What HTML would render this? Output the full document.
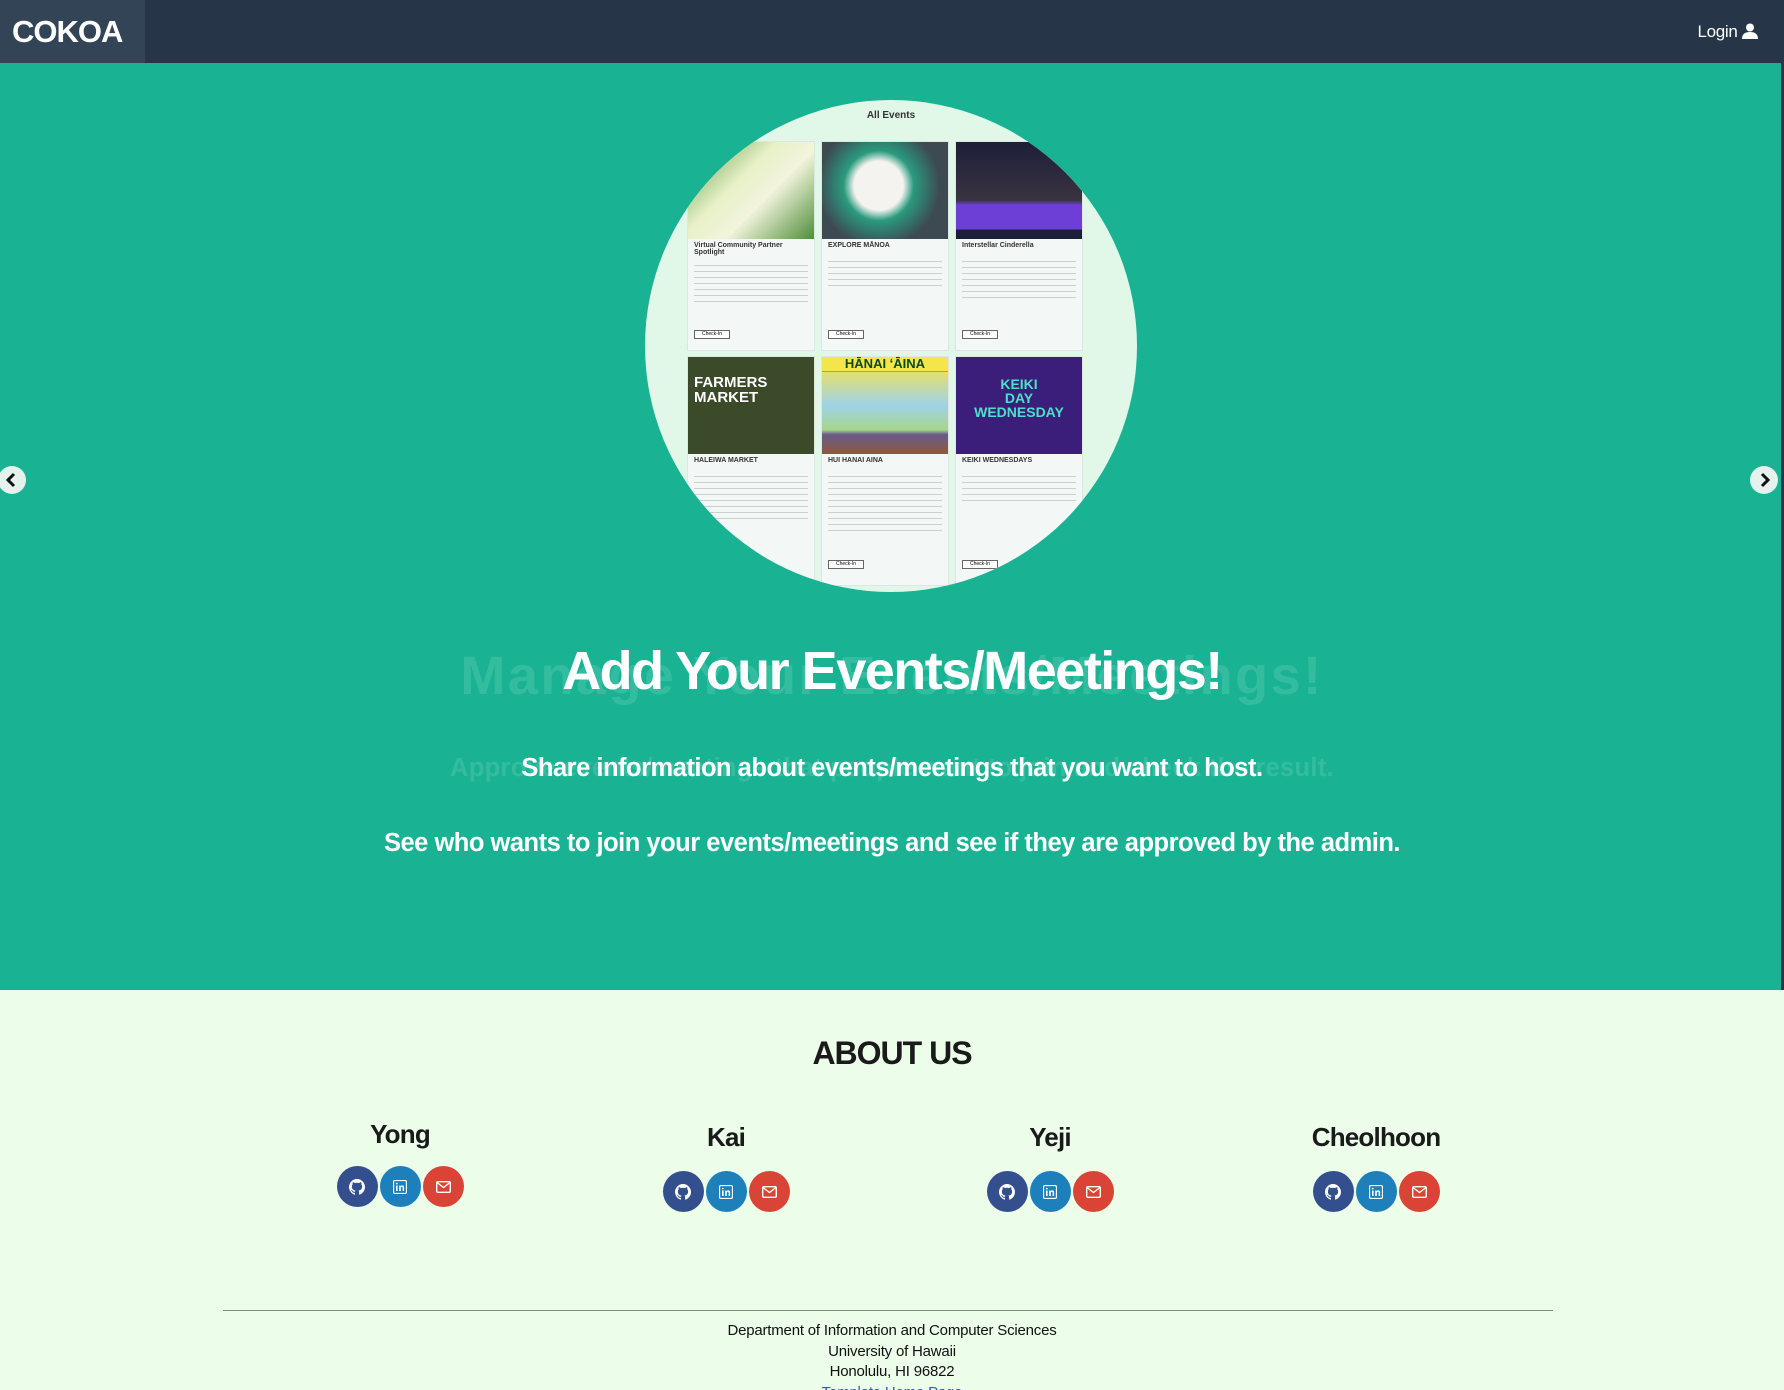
<!DOCTYPE html>
<html><head><meta charset="utf-8"><style>
*{margin:0;padding:0;box-sizing:border-box}
html,body{width:1784px;height:1390px;overflow:hidden}
body{font-family:"Liberation Sans",sans-serif;background:#ecfdea;position:relative}
.nav{position:absolute;left:0;top:0;width:1784px;height:63px;background:#263648}
.logo{position:absolute;left:0;top:0;width:145px;height:66px;background:#334456;color:#fff;font-size:31px;font-weight:bold;line-height:63px;padding-left:12px;letter-spacing:-1px}
.login{position:absolute;right:26px;top:22px;color:#fff;font-size:17px;letter-spacing:-0.3px}
.hero{position:absolute;left:0;top:63px;width:1784px;height:927px;background:#19b394}
.circle{position:absolute;left:645px;top:100px;width:492px;height:492px;border-radius:50%;background:#e1f7e8;overflow:hidden}
.card{position:absolute;background:#f3f8f6;border:1px solid #dde6e3}
.img{position:absolute;left:0;top:0;width:100%;height:97px}
.t{position:absolute;left:6px;font-size:7px;font-weight:bold;color:#333}
.lines{position:absolute;left:6px;right:6px;height:40px;background:repeating-linear-gradient(#f3f8f6 0 3px,#c9d0ce 3px 4px,#f3f8f6 4px 6px)}
.btn{position:absolute;left:6px;width:36px;height:9px;border:1px solid #666;font-size:5px;text-align:center;background:#fff}
.arrow{position:absolute;width:28px;height:28px;border-radius:50%;background:#e6f2ee;top:466px}
h1{position:absolute;left:0;width:1784px;text-align:center;top:640px;color:#fff;font-size:54px;letter-spacing:-1.5px;font-weight:bold}
.ghost{position:absolute;left:0;width:1784px;text-align:center;color:rgba(255,255,255,.12);font-weight:bold}
.p{position:absolute;left:0;width:1784px;text-align:center;color:#fff;font-size:25.5px;font-weight:bold;letter-spacing:-0.5px}
.about{position:absolute;top:1035px;width:1784px;text-align:center;font-size:32px;font-weight:bold;color:#1a1a1a;letter-spacing:-1px}
.m{position:absolute;width:200px;text-align:center}
.m h3{font-size:26px;color:#1a1a1a;letter-spacing:-0.8px}
.ic{display:flex;justify-content:center;gap:2px;margin-top:18px}
.ic span{width:41px;height:41px;border-radius:50%;display:flex;align-items:center;justify-content:center}
.g{background:#344f8e}.l{background:#1e80ba}.e{background:#d94436}
hr{position:absolute;left:223px;width:1330px;top:1310px;border:0;border-top:1px solid #888}
.foot{position:absolute;top:1321px;width:1784px;text-align:center;font-size:15px;line-height:20.5px;color:#111;letter-spacing:-0.2px}
</style></head><body>
<div class="nav"><div class="logo">COKOA</div><div class="login">Login <svg width="16" height="16" viewBox="0 0 16 16" style="vertical-align:-2px"><circle cx="8" cy="4.5" r="4" fill="#fff"/><path d="M0 16c0-5 3-7 8-7s8 2 8 7z" fill="#fff"/></svg></div></div>
<div class="hero"></div>
<div style="position:absolute;right:0;top:63px;width:3px;height:927px;background:#263648"></div>
<div class="circle">
 <div style="position:absolute;top:10px;width:100%;text-align:center;font-size:10px;font-weight:bold;color:#333">All Events</div>
 <div class="card" style="left:42px;top:41px;width:128px;height:210px"><div class="img" style="background:linear-gradient(135deg,#5c9a45,#e8f1c8 40%,#f2f4dc 60%,#4f8d3a)"></div><div class="t" style="top:100px">Virtual Community Partner Spotlight</div><div class="lines" style="top:120px"></div><div class="btn" style="top:188px">Check-In</div></div>
 <div class="card" style="left:176px;top:41px;width:128px;height:210px"><div class="img" style="background:radial-gradient(circle at 45% 45%,#f5f3f0 28%,#2a9a7e 40%,#3d4a52 70%)"></div><div class="t" style="top:100px">EXPLORE MĀNOA</div><div class="lines" style="top:116px;height:30px"></div><div class="btn" style="top:188px">Check-In</div></div>
 <div class="card" style="left:310px;top:41px;width:128px;height:210px"><div class="img" style="background:linear-gradient(#1c1f3a 0,#3a3340 60%,#6d3fd6 65%,#6d3fd6 90%,#1c1f3a 90%)"></div><div class="t" style="top:100px">Interstellar Cinderella</div><div class="lines" style="top:116px;height:40px"></div><div class="btn" style="top:188px">Check-In</div></div>
 <div class="card" style="left:42px;top:256px;width:128px;height:230px"><div class="img" style="background:#3b4a28"><div style="color:#fff;font-size:15px;font-weight:bold;padding:18px 0 0 6px;line-height:15px">FARMERS<br>MARKET</div></div><div class="t" style="top:100px">HALEIWA MARKET</div><div class="lines" style="top:116px;height:50px"></div></div>
 <div class="card" style="left:176px;top:256px;width:128px;height:230px"><div class="img" style="background:linear-gradient(#2a8a4a 0,#2a8a4a 15%,#e6e06a 15%,#9fd2e8 50%,#a6d68a 75%,#6a5a8c 80%,#8a5a3a)"><div style="color:#0a4a20;font-size:13px;font-weight:bold;text-align:center;background:#f2e64a;line-height:14px">HĀNAI ʻĀINA</div></div><div class="t" style="top:100px">HUI HANAI AINA</div><div class="lines" style="top:116px;height:60px"></div><div class="btn" style="top:203px">Check-In</div></div>
 <div class="card" style="left:310px;top:256px;width:128px;height:230px"><div class="img" style="background:#3a1e7a"><div style="color:#4de0c8;font-size:14px;font-weight:bold;text-align:center;padding-top:20px;line-height:14px">KEIKI<br>DAY<br>WEDNESDAY</div></div><div class="t" style="top:100px">KEIKI WEDNESDAYS</div><div class="lines" style="top:116px;height:30px"></div><div class="btn" style="top:203px">Check-In</div></div>
</div>
<div class="arrow" style="left:-2px"><svg width="28" height="28"><path d="M16 8l-6 6 6 6" stroke="#111" stroke-width="3" fill="none"/></svg></div>
<div class="arrow" style="left:1750px"><svg width="28" height="28"><path d="M12 8l6 6-6 6" stroke="#111" stroke-width="3" fill="none"/></svg></div>
<div class="ghost" style="top:645px;font-size:54px;letter-spacing:2.5px">Manage Your Events/Meetings!</div>
<div class="ghost" style="top:754px;font-size:25.5px;letter-spacing:0.3px">Approve events/meetings that people want to join and check the result.</div>
<h1>Add Your Events/Meetings!</h1>
<div class="p" style="top:754px">Share information about events/meetings that you want to host.</div>
<div class="p" style="top:829px">See who wants to join your events/meetings and see if they are approved by the admin.</div>
<div class="about">ABOUT US</div>
<div class="m" style="left:300px;top:1119px"><h3>Yong</h3><div class="ic" style="margin-top:16px">ICONS</div></div>
<div class="m" style="left:626px;top:1122px"><h3>Kai</h3><div class="ic">ICONS</div></div>
<div class="m" style="left:950px;top:1122px"><h3>Yeji</h3><div class="ic">ICONS</div></div>
<div class="m" style="left:1276px;top:1122px"><h3>Cheolhoon</h3><div class="ic">ICONS</div></div>
<hr>
<div class="foot">Department of Information and Computer Sciences<br>University of Hawaii<br>Honolulu, HI 96822<br><span style="color:#2a5fc4">Template Home Page</span></div>
<script>
var s='<span class="g"><svg width="16" height="16" viewBox="0 0 16 16"><path fill="#fff" d="M8 0C3.6 0 0 3.6 0 8c0 3.5 2.3 6.5 5.5 7.6.4.1.5-.2.5-.4v-1.4c-2.2.5-2.7-1-2.7-1-.4-.9-.9-1.2-.9-1.2-.7-.5.1-.5.1-.5.8.1 1.2.8 1.2.8.7 1.2 1.900.9 2.3.7.1-.5.3-.9.5-1.1-1.8-.2-3.6-.9-3.6-4 0-.9.3-1.600.8-2.1-.1-.2-.4-1 .1-2.1 0 0 .7-.2 2.2.8.6-.2 1.3-.3 2-.3s1.4.1 2 .3c1.5-1 2.2-.8 2.2-.8.4 1.1.2 1.9.1 2.1.5.6.8 1.3.8 2.1 0 3.1-1.9 3.8-3.6 4 .3.3.6.8.6 1.5v2.2c0 .2.1.5.6.4C13.7 14.5 16 11.5 16 8c0-4.4-3.6-8-8-8z"/></svg></span><span class="l"><svg width="14" height="14" viewBox="0 0 14 14"><rect x="0.5" y="0.5" width="13" height="13" rx="1.5" fill="none" stroke="#fff" stroke-width="1.3"/><rect x="3" y="5.5" width="1.6" height="5.5" fill="#fff"/><circle cx="3.8" cy="3.6" r="0.9" fill="#fff"/><path d="M6.2 11V5.5h1.5v.8c.4-.6 1-.9 1.7-.9 1.2 0 1.7.8 1.7 2V11H9.6V7.8c0-.6-.2-1-.8-1s-1 .4-1 1V11z" fill="#fff"/></svg></span><span class="e"><svg width="15" height="12" viewBox="0 0 15 12"><rect x="0.7" y="0.7" width="13.6" height="10.6" rx="1.2" fill="none" stroke="#fff" stroke-width="1.4"/><path d="M1 1.5l6.5 5 6.5-5" fill="none" stroke="#fff" stroke-width="1.4"/></svg></span>';
document.querySelectorAll('.ic').forEach(function(e){e.innerHTML=s});
</script>
</body></html>
